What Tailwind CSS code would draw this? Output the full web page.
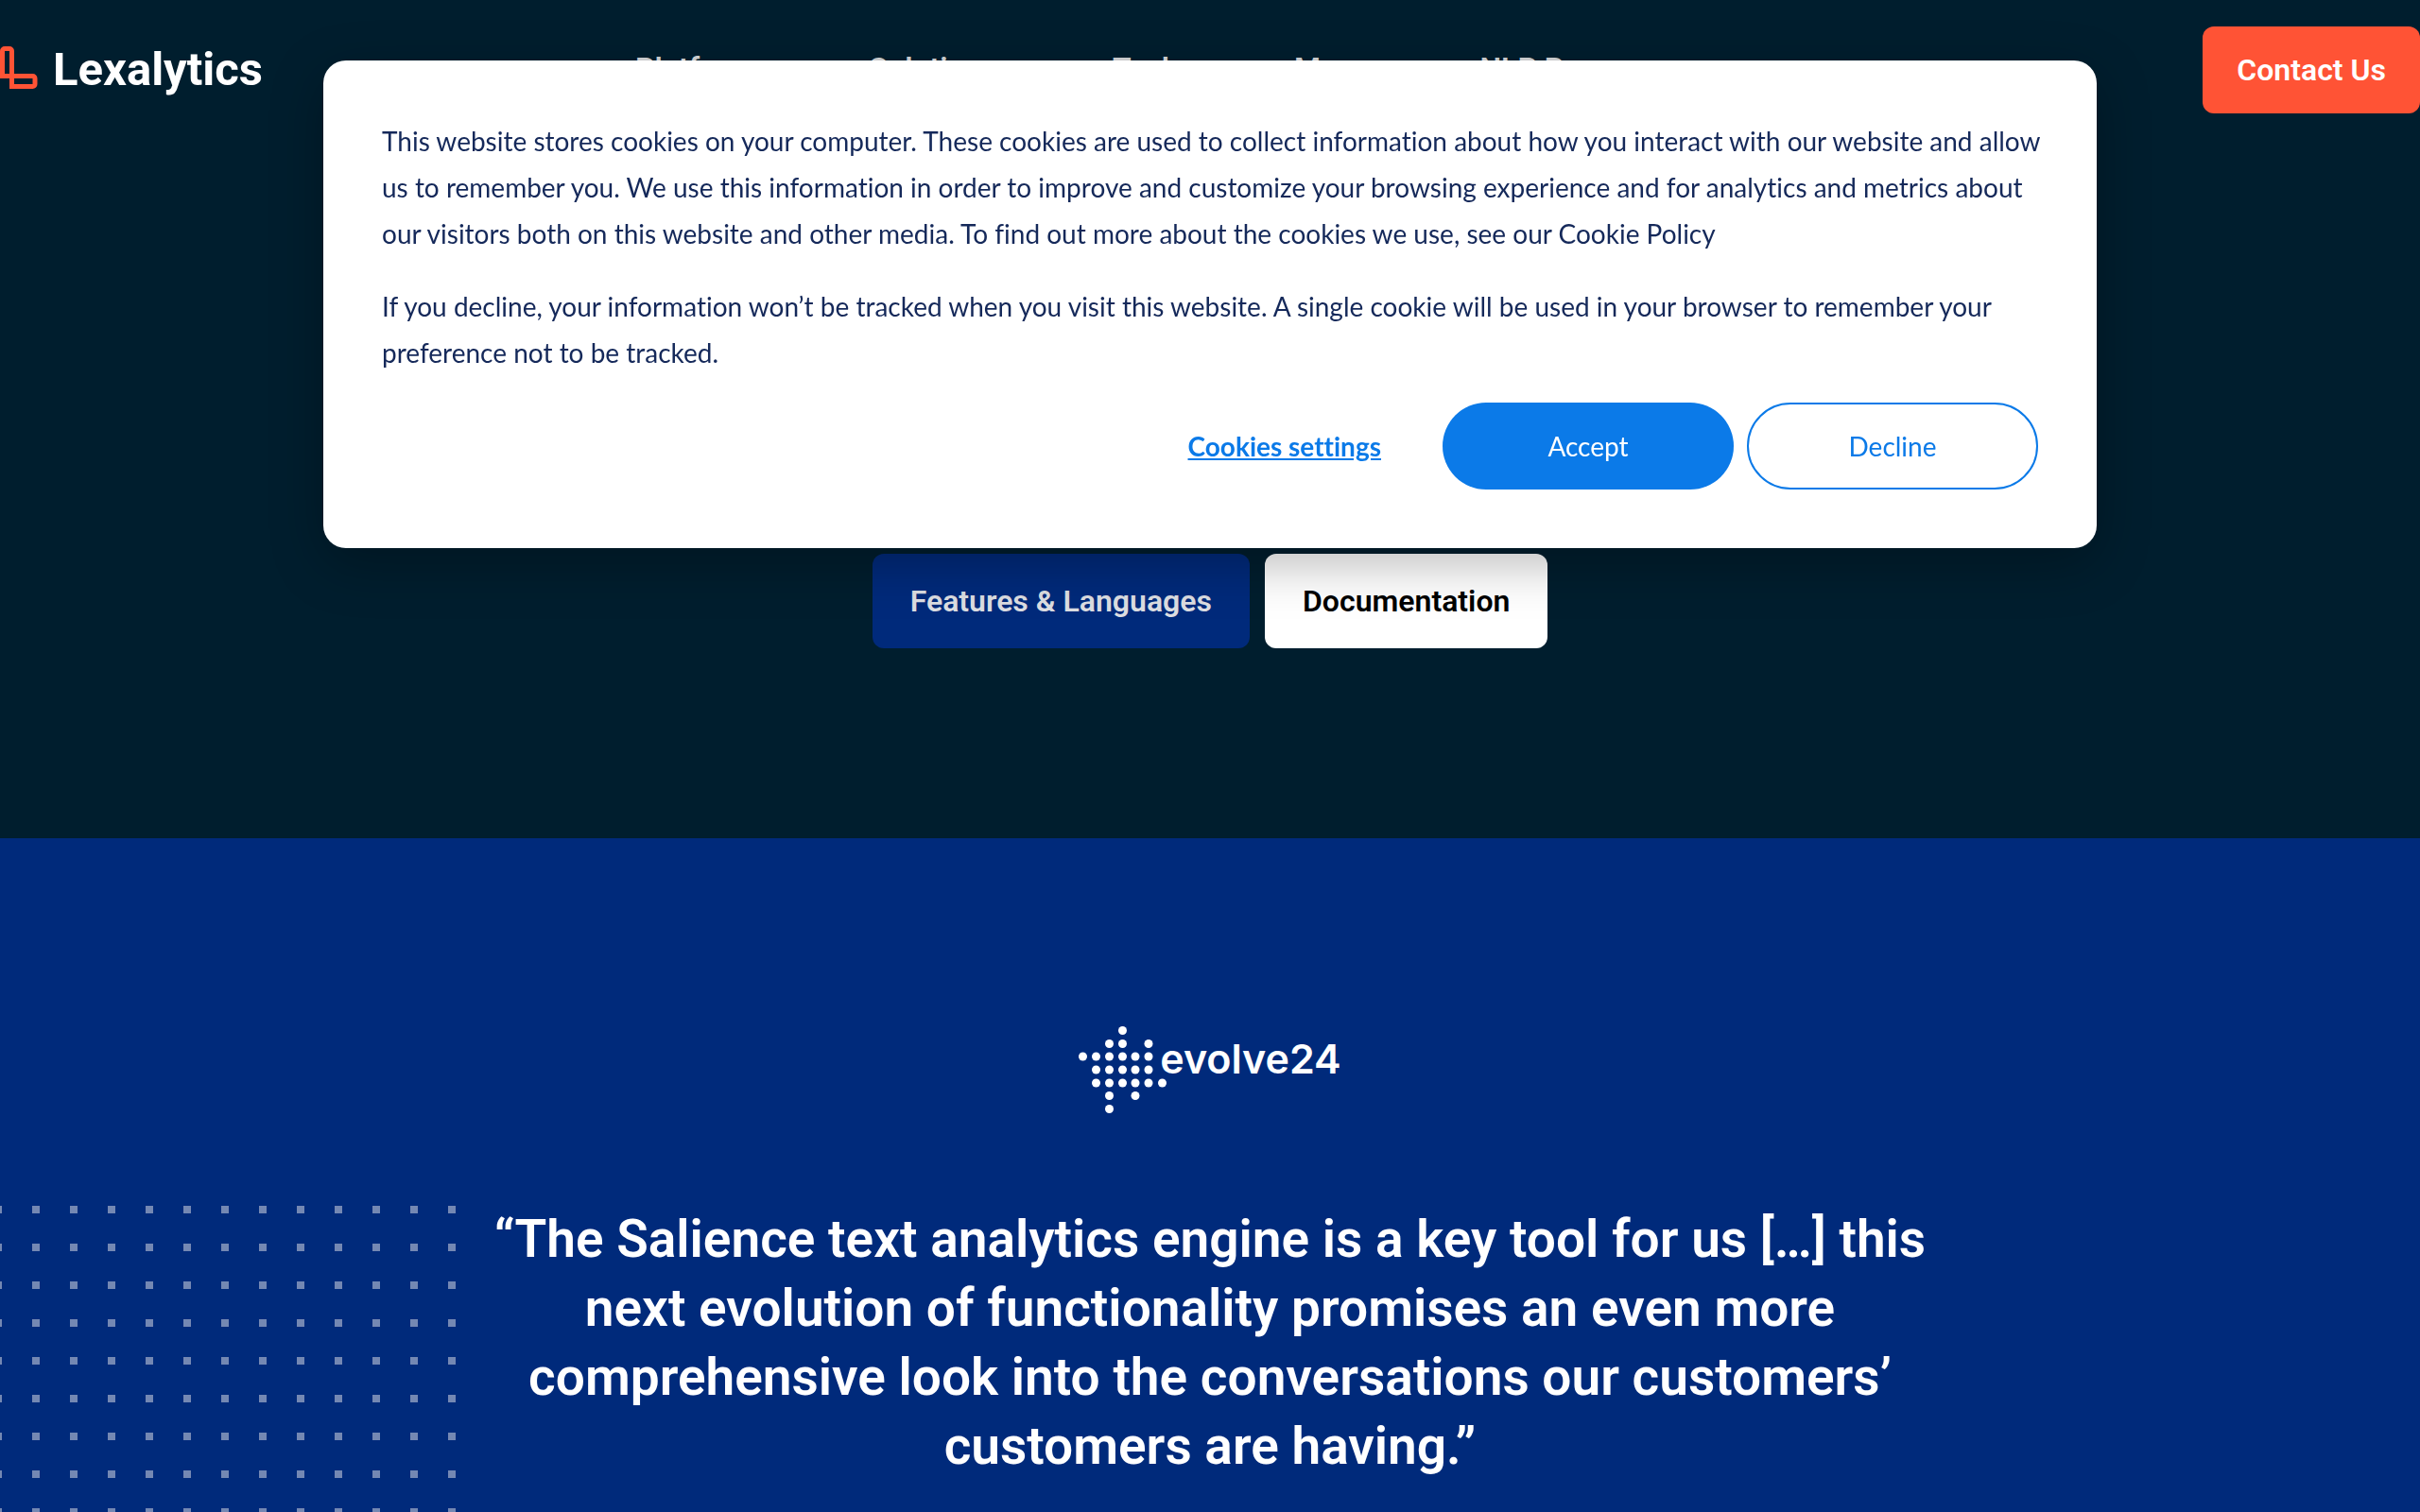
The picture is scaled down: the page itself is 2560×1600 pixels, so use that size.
<!DOCTYPE html>
<html lang="en">
<head>
  <meta charset="UTF-8" />
  <meta name="viewport" content="width=device-width, initial-scale=1" />
  <title>Salience | Lexalytics</title>
  <script src="https://cdn.jsdelivr.net/npm/@tailwindcss/browser@4"></script>
</head>
<body class="bg-[#002a7b] text-white font-['Roboto',sans-serif]">

<!-- Hero -->
<div class="bg-[#001e2e] flex flex-col min-h-[887px]">
  <header class="flex items-center py-7">
    <a href="/" class="flex items-center gap-4 text-[49px] leading-[60px] font-bold">
      <svg class="mb-1" width="40" height="46" viewBox="0 0 40 46" fill="none" stroke="#ff5335" stroke-width="5" aria-hidden="true">
        <path d="M2.500 31.500V5a2.500 2.500 0 0 1 2.500-2.500H10A2.500 2.500 0 0 1 12.500 5V42.500H34.500A2.500 2.500 0 0 0 37 40V34A2.500 2.500 0 0 0 34.500 31.500H0" />
      </svg>
      <span>Lexalytics</span>
    </a>
    <nav class="ml-[394px] pb-1 flex gap-[122px] text-[32px] leading-10 font-semibold text-[#d9dadc]">
      <a href="#">Platform</a>
      <a href="#">Solutions</a>
      <a href="#">Tech</a>
      <a href="#">More</a>
      <a href="#">NLP Resources</a>
    </nav>
    <a href="/contact" class="ml-auto bg-[#ff5335] rounded-xl px-9 py-6 text-[32px] leading-[44px] font-semibold">Contact Us</a>
  </header>

  <div class="flex justify-center gap-4 mt-auto pb-[201px] text-[32px] leading-[44px] font-semibold">
    <a href="#features" class="bg-[#002a7b] text-[#dddee2] rounded-xl px-10 py-7">Features &amp; Languages</a>
    <a href="#docs" class="bg-white text-black rounded-xl px-10 py-7">Documentation</a>
  </div>
</div>

<!-- Testimonial -->
<section class="relative pt-[199px] pb-[200px] overflow-hidden">
  <svg class="absolute left-0 top-[389px]" width="482" height="608" aria-hidden="true">
    <defs>
      <pattern id="dots" x="-6" y="0" width="40" height="40" patternUnits="userSpaceOnUse">
        <rect width="8" height="8" fill="#7488b3" />
      </pattern>
    </defs>
    <rect width="482" height="608" fill="url(#dots)" />
  </svg>

  <div class="flex justify-center items-start">
    <svg width="94" height="94" viewBox="0 0 94 94" fill="#fff" aria-hidden="true">
      <circle cx="46.500" cy="4.500" r="4.500" />
      <circle cx="32.500" cy="18.500" r="4.500" /><circle cx="46.500" cy="18.500" r="4.500" /><circle cx="74" cy="18.500" r="4.500" />
      <circle cx="4.500" cy="32" r="4.500" /><circle cx="18.500" cy="32" r="4.500" /><circle cx="32.500" cy="32" r="4.500" /><circle cx="46.500" cy="32" r="4.500" /><circle cx="60" cy="32" r="4.500" /><circle cx="74" cy="32" r="4.500" />
      <circle cx="18.500" cy="46" r="4.500" /><circle cx="32.500" cy="46" r="4.500" /><circle cx="46.500" cy="46" r="4.500" /><circle cx="60" cy="46" r="4.500" /><circle cx="74" cy="46" r="4.500" />
      <circle cx="18.500" cy="60" r="4.500" /><circle cx="32.500" cy="60" r="4.500" /><circle cx="46.500" cy="60" r="4.500" /><circle cx="60" cy="60" r="4.500" /><circle cx="74" cy="60" r="4.500" /><circle cx="88.500" cy="60" r="4.500" />
      <circle cx="32.500" cy="73.500" r="4.500" /><circle cx="60" cy="73.500" r="4.500" />
      <circle cx="32.500" cy="87.500" r="4.500" />
    </svg>
    <span class="-ml-2 mt-2 text-[43px] leading-[52px] font-semibold font-['Inter',sans-serif]">evolve24</span>
  </div>

  <blockquote class="relative max-w-[1560px] mx-auto mt-[95px] text-center text-[55px] leading-[73px] font-semibold">
    “The Salience text analytics engine is a key tool for us […] this<br />
    next evolution of functionality promises an even more<br />
    comprehensive look into the conversations our customers’<br />
    customers are having.”
  </blockquote>
</section>

<!-- Cookie banner -->
<div role="dialog" aria-label="Cookie consent" class="fixed top-16 inset-x-4 mx-auto max-w-[1876px] bg-white rounded-3xl px-[62px] pt-[61px] pb-[62px] shadow-[0_16px_56px_rgba(0,0,0,0.28)] font-['Lato',sans-serif] text-[28px] leading-[49px] text-[#15295a] [font-variant-ligatures:none]">
  <p class="mb-7 -mr-5">This website stores cookies on your computer. These cookies are used to collect information about how you interact with our website and allow us to remember you. We use this information in order to improve and customize your browsing experience and for analytics and metrics about our visitors both on this website and other media. To find out more about the cookies we use, see our Cookie Policy</p>
  <p class="mb-7 -mr-5">If you decline, your information won’t be tracked when you visit this website. A single cookie will be used in your browser to remember your preference not to be tracked.</p>
  <div class="flex justify-end items-center gap-[14px] text-[#0b7ae8]">
    <button type="button" class="font-bold underline mr-[51px]">Cookies settings</button>
    <button type="button" class="w-[308px] h-[92px] rounded-full bg-[#0b7ae8] text-white">Accept</button>
    <button type="button" class="w-[308px] h-[92px] rounded-full border-2 border-[#0b7ae8]">Decline</button>
  </div>
</div>

</body>
</html>
